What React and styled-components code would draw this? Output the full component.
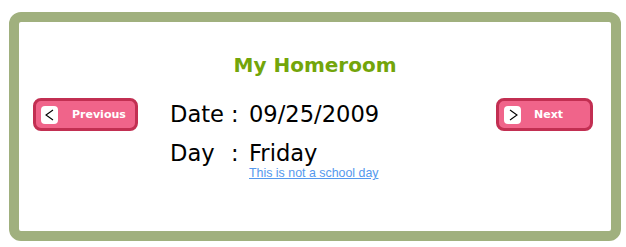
import styled, { createGlobalStyle } from 'styled-components';

const GlobalStyle = createGlobalStyle`
  body {
    margin: 0;
    background: #ffffff;
    font-family: "DejaVu Sans", Verdana, sans-serif;
  }
`

const Frame = styled.div`
  box-sizing: border-box;
  width: 612px;
  height: 229px;
  margin: 12px 0 0 9px;
  border: 10px solid #a0b07e;
  border-radius: 12px;
  background: #ffffff;
`

const Title = styled.h1`
  margin: 0;
  padding-top: 31px;
  font-size: 20px;
  line-height: 24px;
  font-weight: bold;
  text-align: center;
  color: #73a50a;
`

const Body = styled.div`
  display: flex;
  align-items: flex-start;
  margin-top: 18px;
  padding: 0 18px 0 14px;
`

const NavButton = styled.button`
  box-sizing: border-box;
  display: flex;
  align-items: center;
  width: ${p => p.$width}px;
  height: 33px;
  margin-top: 3px;
  padding: 0 0 0 5px;
  gap: ${p => p.$gap}px;
  border: 3px solid #c22f52;
  border-radius: 8px;
  background: #f0648a;
  color: #ffffff;
  font-family: "DejaVu Sans", Verdana, sans-serif;
  font-size: 11px;
  font-weight: bold;
  cursor: pointer;
`

const Arrow = styled.span`
  display: flex;
  align-items: center;
  justify-content: center;
  width: 17px;
  height: 18px;
  border-radius: 4px;
  background: #ffffff;
`

const Info = styled.div`
  margin-left: 32px;
  display: grid;
  grid-template-columns: 61px 18px auto;
  font-size: 22.6px;
  line-height: 39px;
  color: #000000;
`

const Value = styled.div`
  display: flex;
  flex-direction: column;
`

const NoSchool = styled.a`
  display: block;
  margin-top: -7px;
  font-family: "Liberation Sans", Arial, sans-serif;
  font-size: 12.4px;
  line-height: 14px;
  color: #5599ee;
  text-decoration: underline;
`

const Spacer = styled.div`
  flex: 1;
`

function ArrowIcon({ dir }) {
  const pts = dir === 'left' ? '10,3 3,8 10,13' : '4,3 11,8 4,13';
  return (
    <svg width="14" height="16" viewBox="0 0 14 16">
      <polyline points={pts} fill="none" stroke="#000" strokeWidth="1.1" />
    </svg>
  );
}

export default function App() {
  return (
    <>
      <GlobalStyle />
      <Frame>
        <Title>My Homeroom</Title>
        <Body>
          <NavButton $width={105} $gap={14}>
            <Arrow><ArrowIcon dir="left" /></Arrow>
            Previous
          </NavButton>
          <Info>
            <div>Date</div>
            <div>:</div>
            <div>09/25/2009</div>
            <div>Day</div>
            <div>:</div>
            <Value>
              <div>Friday</div>
              <NoSchool href="#">This is not a school day</NoSchool>
            </Value>
          </Info>
          <Spacer />
          <NavButton $width={97} $gap={13}>
            <Arrow><ArrowIcon dir="right" /></Arrow>
            Next
          </NavButton>
        </Body>
      </Frame>
    </>
  );
}
